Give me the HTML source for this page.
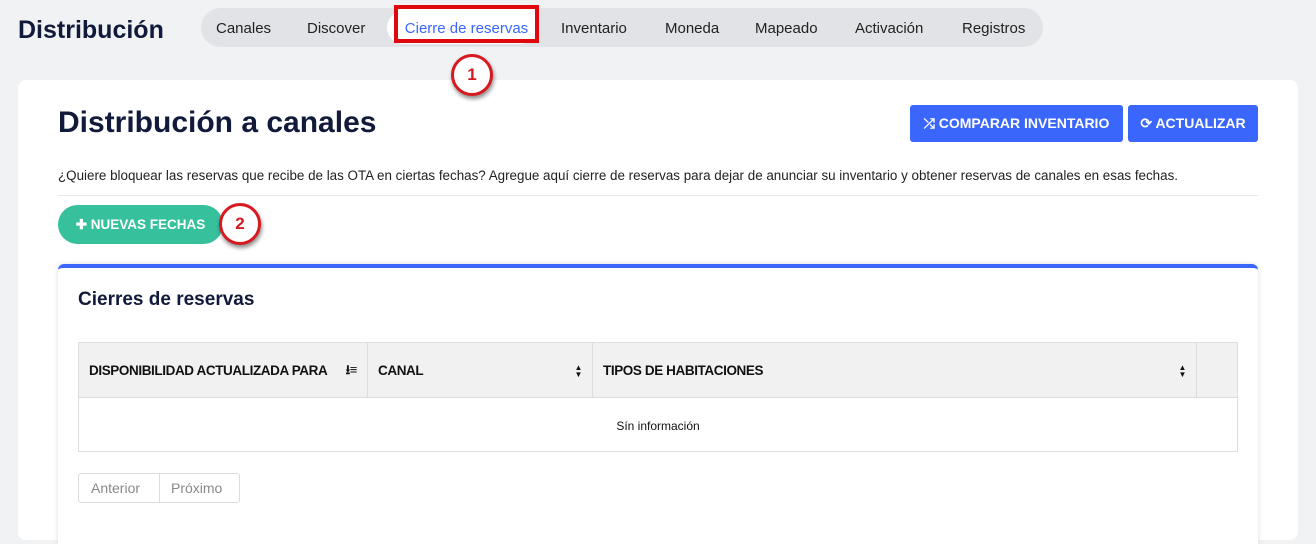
<!DOCTYPE html>
<html><head><meta charset="utf-8"><style>
*{box-sizing:border-box;margin:0;padding:0}
body{width:1316px;height:521px;background:#f1f2f4;font-family:"Liberation Sans",sans-serif;position:relative;overflow:hidden;color:#111a3a}
.a{position:absolute}
.nav{left:201px;top:8px;width:842px;height:39px;background:#e1e3e7;border-radius:20px}
.nav span{position:absolute;top:12px;font-size:15px;color:#222;white-space:nowrap}
.card{left:18px;top:80px;width:1280px;height:460px;background:#fff;border-radius:8px}
.btn{background:#3a66fb;color:#fff;font-weight:bold;font-size:14px;border-radius:3px;height:37px;top:105px;display:flex;align-items:center;justify-content:center;gap:4px}
.circ{width:42px;height:42px;border-radius:50%;border:3px solid #d71920;background:#fff;color:#d71920;font-weight:bold;font-size:17px;display:flex;align-items:center;justify-content:center;box-shadow:1px 3px 4px rgba(0,0,0,.45);z-index:5}
.panel{left:58px;top:264px;width:1200px;height:280px;background:#fff;border-top:4px solid #3a66fb;border-radius:6px 6px 0 0;box-shadow:0 0 6px rgba(0,0,0,.12)}
.th{top:342px;height:56px;background:#f1f1f1;border:1px solid #ddd;font-size:13.5px;font-weight:bold;color:#111;padding:20px 0 0 10px;letter-spacing:-0.4px;white-space:nowrap}
.arr{position:absolute;right:10px;top:21px;font-size:8px;line-height:7px}
</style></head><body>
<div class="a" style="left:18px;top:16px;font-size:25px;font-weight:bold;color:#111a3a">Distribución</div>
<div class="a nav">
<span style="left:15px">Canales</span>
<span style="left:106px">Discover</span>
<div class="a" style="left:186px;top:3px;width:150px;height:33px;background:#fff;border-radius:17px"></div>
<span style="left:360px">Inventario</span>
<span style="left:464px">Moneda</span>
<span style="left:554px">Mapeado</span>
<span style="left:654px">Activación</span>
<span style="left:761px">Registros</span>
</div>
<div class="a" style="left:394px;top:5px;width:145px;height:38px;border:4px solid #e0080f;background:#fff;color:#3a66fb;font-size:15px;padding-top:11px;text-align:center;white-space:nowrap">Cierre de reservas</div>
<div class="a card"></div>
<div class="a circ" style="left:451px;top:54px">1</div>
<div class="a" style="left:58px;top:106px;font-size:30px;font-weight:bold;color:#111a3a">Distribución a canales</div>
<div class="a btn" style="left:910px;width:213px">⤮ COMPARAR INVENTARIO</div>
<div class="a btn" style="left:1128px;width:130px">⟳ ACTUALIZAR</div>
<div class="a" style="left:58px;top:168px;font-size:13.4px;color:#222;white-space:nowrap">¿Quiere bloquear las reservas que recibe de las OTA en ciertas fechas? Agregue aquí cierre de reservas para dejar de anunciar su inventario y obtener reservas de canales en esas fechas.</div>
<div class="a" style="left:58px;top:195px;width:1200px;height:1px;background:#e8e8e8"></div>
<div class="a" style="left:58px;top:205px;width:165px;height:39px;background:#36c19c;border-radius:20px;color:#fff;font-weight:bold;font-size:13.5px;display:flex;align-items:center;justify-content:center">✚ NUEVAS FECHAS</div>
<div class="a circ" style="left:219px;top:203px">2</div>
<div class="a panel"></div>
<div class="a" style="left:78px;top:289px;font-size:19px;font-weight:bold;color:#111a3a">Cierres de reservas</div>
<div class="a th" style="left:78px;width:290px">DISPONIBILIDAD ACTUALIZADA PARA<span class="arr" style="font-size:13px;line-height:13px;top:20px">⭳≡</span></div>
<div class="a th" style="left:367px;width:226px">CANAL<span class="arr">▲<br>▼</span></div>
<div class="a th" style="left:592px;width:605px">TIPOS DE HABITACIONES<span class="arr">▲<br>▼</span></div>
<div class="a th" style="left:1196px;width:42px"></div>
<div class="a" style="left:78px;top:397px;width:1160px;height:55px;border:1px solid #ddd;font-size:12px;color:#111;text-align:center;padding-top:21px">Sín información</div>
<div class="a" style="left:78px;top:473px;width:162px;height:30px;border:1px solid #ddd;border-radius:3px;font-size:14px;color:#888">
<span class="a" style="left:12px;top:6px">Anterior</span>
<div class="a" style="left:80px;top:0;width:1px;height:28px;background:#ddd"></div>
<span class="a" style="left:92px;top:6px">Próximo</span></div>
</body></html>
